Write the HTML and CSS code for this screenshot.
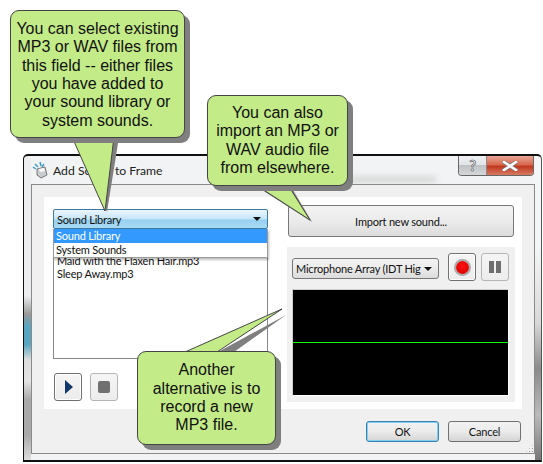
FILE: index.html
```html
<!DOCTYPE html>
<html lang="en">
<head>
  <meta charset="UTF-8">
  <meta name="viewport" content="width=device-width, initial-scale=1.0">
  <title>Add Sound to Frame</title>
  <link rel="stylesheet" href="styles.css">
</head>
<body>
  <div class="dialog">
    <div class="title-bar">
      <svg class="app-icon" width="18" height="18" viewBox="0 0 18 18">
        <path d="M5 8 L13 6 L15 14 L9 17 L5 14 Z" fill="#c9ccd0" stroke="#777" stroke-width="1"/>
        <path d="M7 8 L12 7 L13 10 L8 11 Z" fill="#fff"/>
        <path d="M1 6 L4 8 M3 3 L6 6 M8 1 L9 5 M12 3 L10 6" stroke="#3f9bc4" stroke-width="1.5"/>
      </svg>
      <span class="title-text">Add Sound to Frame</span>
      <div class="title-smudge"></div>
      <div class="caption-buttons">
        <div class="help-btn">?</div>
        <div class="close-btn">
          <svg width="16" height="10" viewBox="0 0 16 10">
            <path d="M2 1 L14 9 M14 1 L2 9" stroke="#777" stroke-width="4" stroke-linecap="square"/>
            <path d="M2 1 L14 9 M14 1 L2 9" stroke="#fff" stroke-width="2.6" stroke-linecap="square"/>
          </svg>
        </div>
      </div>
    </div>

    <div class="client">
      <div class="panels">
        <div class="left-panel">
          <div class="combo-wrap">
            <div class="combo">
              <span>Sound Library</span>
              <span class="arrow"></span>
            </div>
            <ul class="combo-list">
              <li class="selected">Sound Library</li>
              <li>System Sounds</li>
            </ul>
          </div>
          <ul class="file-list">
            <li>Maid with the Flaxen Hair.mp3</li>
            <li>Sleep Away.mp3</li>
          </ul>
          <div class="player-buttons">
            <button class="icon-btn active"><span class="play-icon"></span></button>
            <button class="icon-btn"><span class="stop-icon"></span></button>
          </div>
        </div>

        <div class="right-panel">
          <button class="import-btn">Import new sound...</button>
          <div class="record-box">
            <div class="record-controls">
              <div class="mic-select">
                <span class="mic-name">Microphone Array (IDT Hig</span>
                <span class="arrow"></span>
              </div>
              <button class="icon-btn active"><span class="rec-icon"></span></button>
              <button class="icon-btn"><span class="pause-icon"><i></i><i></i></span></button>
            </div>
            <div class="scope"><div class="scope-line"></div></div>
          </div>
        </div>
      </div>

      <div class="footer">
        <button class="dlg-btn default">OK</button>
        <button class="dlg-btn">Cancel</button>
      </div>
      <div class="grip"></div>
    </div>
  </div>

  <!-- callout tails, drawn under the bubbles -->
  <svg class="tails" width="543" height="464" viewBox="0 0 543 464">
    <g fill="#7f7f7f">
      <path d="M80 137 L107 212 L119 137 Z"/>
      <path d="M262 190 L312 222 L293 190 Z"/>
      <path d="M218 352 L286 315 L234 352 Z"/>
    </g>
    <g fill="#c3eb88" stroke="#444" stroke-width="1">
      <path d="M72 137 L105 211 L114 137 Z"/>
      <path d="M256 185 L310 220 L288 185 Z"/>
      <path d="M185 352 L282 309 L217 352 Z"/>
    </g>
  </svg>

  <div class="callout callout-select">You can select existing<br>MP3 or WAV files from<br>this field -- either files<br>you have added to<br>your sound library or<br>system sounds.</div>
  <div class="callout callout-import">You can also<br>import an MP3 or<br>WAV audio file<br>from elsewhere.</div>
  <div class="callout callout-record">Another<br>alternative is to<br>record a new<br>MP3 file.</div>
</body>
</html>
```

FILE: styles.css
```css
body {
  margin: 0;
  width: 543px;
  height: 464px;
  position: relative;
  overflow: hidden;
  background: white;
  font-family: Lato, sans-serif;
  font-size: 11px;
  letter-spacing: -0.2px;
  color: #111;
}

ul {
  list-style: none;
  margin: 0;
  padding: 0;
}

button {
  font-family: inherit;
  font-size: inherit;
  letter-spacing: inherit;
  color: inherit;
  padding: 0;
}

/* window */
.dialog {
  position: absolute;
  left: 23px;
  top: 154px;
  width: 519px;
  height: 308px;
  box-sizing: border-box;
  border: 1px solid #111;
  border-top-width: 2px;
  border-bottom-width: 2px;
  border-right-color: #555;
  border-radius: 5px 5px 0 0;
  background:
    linear-gradient(#eceeef 46%, #999 52%, #5aa6c0 56%, #5aa6c0 62%, #ddd 67%, #e4e4e4 74%, #aaa 80%, #aaa 92%, #ddd) left / 7px 100% no-repeat,
    linear-gradient(#f4f5f6 30%, #d8d8d8 55%, #8a8a8a 70%, #bbb 85%, #777) right / 6px 100% no-repeat,
    #f2f3f4;
  padding: 0 6px 6px 7px;
  display: flex;
  flex-direction: column;
}

.title-bar {
  height: 28px;
  display: flex;
  align-items: center;
  flex: none;
  position: relative;
}

.app-icon {
  margin: 0 3px 0 1px;
}

.title-text {
  font-size: 12.2px;
  letter-spacing: 0;
  color: #222;
}

/* blurred window text showing through the glass */
.title-smudge {
  position: absolute;
  left: 319px;
  top: 21px;
  width: 86px;
  height: 5px;
  background: #cfcfcf;
  filter: blur(3px);
}

.caption-buttons {
  margin-left: auto;
  margin-right: 1px;
  align-self: flex-start;
  display: flex;
  height: 19px;
  border: 1px solid #666;
  border-top: none;
  border-radius: 0 0 4px 4px;
  overflow: hidden;
}

.help-btn {
  width: 27px;
  text-align: center;
  font-size: 15px;
  line-height: 18px;
  font-weight: bold;
  color: #eee;
  -webkit-text-stroke: 0.6px #555;
  background: linear-gradient(#eef0f2, #e2e5e8 45%, #bfc3c6 50%, #d5d8da);
  border-right: 1px solid #888;
}

.close-btn {
  width: 46px;
  display: flex;
  align-items: center;
  justify-content: center;
  background: linear-gradient(#e8a596, #d9694f 45%, #c0391f 55%, #d67a62);
}

.client {
  flex: 1;
  position: relative;
  border: 1px solid #8a8a8a;
  background: #f0f0f0;
  padding: 12px 12px 0;
  display: flex;
  flex-direction: column;
}

.grip {
  position: absolute;
  right: 0;
  bottom: 0;
  width: 9px;
  height: 9px;
  background: radial-gradient(circle, #999 1px, transparent 1px) 0 0 / 3px 3px;
  clip-path: polygon(100% 0, 100% 100%, 0 100%);
}

.panels {
  display: flex;
  background: white;
  height: 212px;
  box-sizing: border-box;
}

/* left side */
.left-panel {
  width: 243px;
  padding: 12px 0 0 9px;
  box-sizing: border-box;
}

.combo-wrap {
  width: 215px;
  position: relative;
}

.combo {
  height: 20px;
  box-sizing: border-box;
  border: 1px solid #3f7a9e;
  border-radius: 2px;
  background: linear-gradient(#ebf6fd, #c5e5f8 50%, #97d0f0 55%, #a9daf5);
  display: flex;
  align-items: center;
  justify-content: space-between;
  padding: 0 4px 0 3px;
}

.arrow {
  width: 0;
  height: 0;
  border-left: 4px solid transparent;
  border-right: 4px solid transparent;
  border-top: 4px solid #111;
  margin-right: 2px;
}

.combo-list {
  position: absolute;
  left: 0;
  right: 0;
  top: 20px;
  background: white;
  border: 1px solid #9a9a9a;
  border-top: none;
  box-shadow: 1px 2px 2px rgba(0, 0, 0, 0.25);
  z-index: 1;
}

.combo-list li {
  height: 14px;
  line-height: 14px;
  padding-left: 2px;
}

.combo-list .selected {
  background: #3399ff;
  color: white;
}

.file-list {
  width: 215px;
  height: 130px;
  box-sizing: border-box;
  border: 1px solid #828790;
  border-top: none;
  padding: 25px 0 0 3px;
  line-height: 13px;
}

.player-buttons {
  display: flex;
  gap: 8px;
  margin: 14px 0 0 1px;
}

.icon-btn {
  width: 28px;
  height: 28px;
  border: 1px solid #b5b5b5;
  border-radius: 3px;
  background: linear-gradient(#f5f5f5, #ececec);
  display: flex;
  align-items: center;
  justify-content: center;
}

.icon-btn.active {
  border-color: #707070;
  box-shadow: inset 0 0 0 1px #fff;
}

.play-icon {
  width: 0;
  height: 0;
  border-left: 8px solid #113a6b;
  border-top: 7px solid transparent;
  border-bottom: 7px solid transparent;
  margin-left: 1px;
}

.stop-icon {
  width: 12px;
  height: 12px;
  border-radius: 2px;
  background: #707070;
}

.rec-icon {
  width: 13px;
  height: 13px;
  border-radius: 50%;
  background: radial-gradient(circle at 50% 40%, #ff1010, #d00000);
  box-shadow: 0 0 0 2px #aaa;
}

.pause-icon {
  display: flex;
  gap: 2px;
}

.pause-icon i {
  width: 5px;
  height: 12px;
  background: #6e6e6e;
}

/* right side */
.right-panel {
  flex: 1;
  padding: 8px 7px 7px 1px;
  display: flex;
  flex-direction: column;
  gap: 10px;
}

.import-btn {
  height: 32px;
  flex: none;
  margin: 0 1px;
  border: 1px solid #777;
  border-radius: 3px;
  background: linear-gradient(#f3f3f3, #ebebeb 50%, #dcdcdc);
}

.record-box {
  background: #f0f0f0;
  height: 155px;
  flex: none;
  padding: 6px 6px 6px 5px;
  box-sizing: border-box;
  display: flex;
  flex-direction: column;
  gap: 8px;
}

.record-controls {
  display: flex;
  align-items: flex-start;
  height: 28px;
  flex: none;
}

.mic-select {
  width: 147px;
  height: 21px;
  box-sizing: border-box;
  border: 1px solid #777;
  border-radius: 3px;
  background: linear-gradient(#f3f3f3, #ebebeb 50%, #dcdcdc);
  display: flex;
  align-items: center;
  justify-content: space-between;
  padding: 0 4px 0 3px;
  margin: 5px 9px 0 0;
}

.mic-name {
  white-space: nowrap;
}

.record-controls .icon-btn + .icon-btn {
  margin-left: 5px;
}

.scope {
  flex: 1;
  background: black;
  border: 1px solid #ccc;
  border-right-color: white;
  border-bottom-color: white;
  display: flex;
  align-items: center;
}

.scope-line {
  width: 100%;
  height: 1px;
  background: #00ff00;
}

/* bottom buttons */
.footer {
  display: flex;
  justify-content: flex-end;
  gap: 9px;
  padding: 12px 1px 0 0;
}

.dlg-btn {
  width: 73px;
  height: 21px;
  border: 1px solid #707070;
  border-radius: 3px;
  background: linear-gradient(#f2f2f2, #ebebeb 50%, #d5d5d5);
}

.dlg-btn.default {
  border-color: #3c7fb1;
  box-shadow: inset 0 0 0 1px #7fd0f2;
}

/* callouts */
.tails {
  position: absolute;
  left: 0;
  top: 0;
  z-index: 2;
}

.callout {
  position: absolute;
  z-index: 3;
  box-sizing: border-box;
  background: #c3eb88;
  border: 1px solid #444;
  border-radius: 9px;
  box-shadow: 5px 5px 0 #7f7f7f;
  font-family: "Liberation Sans", Arial, sans-serif;
  font-size: 16px;
  letter-spacing: 0;
  line-height: 18.4px;
  text-align: center;
  color: #111;
  display: flex;
  align-items: center;
  justify-content: center;
}

.callout-select {
  left: 10px;
  top: 10px;
  width: 175px;
  height: 128px;
  padding-top: 2px;
}

.callout-import {
  left: 207px;
  top: 95px;
  width: 141px;
  height: 91px;
}

.callout-record {
  left: 137px;
  top: 351px;
  width: 139px;
  height: 94px;
}
```
